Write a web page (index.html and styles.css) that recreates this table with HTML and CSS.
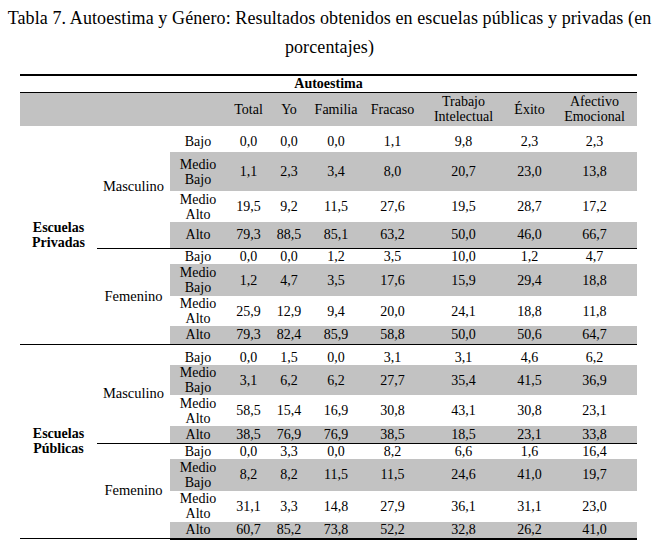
FILE: index.html
```html
<!DOCTYPE html>
<html lang="es">
<head>
<meta charset="utf-8">
<link rel="stylesheet" href="styles.css">
</head>
<body>
<div class="title">
  <div class="tline">Tabla 7. Autoestima y Género: Resultados obtenidos en escuelas públicas y privadas (en</div>
  <div class="tline">porcentajes)</div>
</div>
<table class="tbl">
  <colgroup>
    <col class="c77"><col class="c73"><col class="c56"><col class="c45"><col class="c36"><col class="c58"><col class="c55"><col class="c87"><col class="c45"><col class="c85">
  </colgroup>
  <tr class="h17 top"><th colspan="10" class="bold">Autoestima</th></tr>
  <tr class="h34 grey head">
    <td></td><td></td><td></td><td>Total</td><td>Yo</td><td>Familia</td><td>Fracaso</td><td>Trabajo<br>Intelectual</td><td>Éxito</td><td>Afectivo<br>Emocional</td>
  </tr>

  <tr class="h26 low"><td rowspan="8" class="bold">Escuelas<br>Privadas</td><td rowspan="4" class="sex">Masculino</td><td>Bajo</td><td>0,0</td><td>0,0</td><td>0,0</td><td>1,1</td><td>9,8</td><td>2,3</td><td>2,3</td></tr>
  <tr class="h39 g"><td>Medio<br>Bajo</td><td>1,1</td><td>2,3</td><td>3,4</td><td>8,0</td><td>20,7</td><td>23,0</td><td>13,8</td></tr>
  <tr class="h31"><td>Medio<br>Alto</td><td>19,5</td><td>9,2</td><td>11,5</td><td>27,6</td><td>19,5</td><td>28,7</td><td>17,2</td></tr>
  <tr class="h26 g sub"><td>Alto</td><td>79,3</td><td>88,5</td><td>85,1</td><td>63,2</td><td>50,0</td><td>46,0</td><td>66,7</td></tr>

  <tr class="h16"><td rowspan="4" class="sex">Femenino</td><td>Bajo</td><td>0,0</td><td>0,0</td><td>1,2</td><td>3,5</td><td>10,0</td><td>1,2</td><td>4,7</td></tr>
  <tr class="h32 g"><td>Medio<br>Bajo</td><td>1,2</td><td>4,7</td><td>3,5</td><td>17,6</td><td>15,9</td><td>29,4</td><td>18,8</td></tr>
  <tr class="h26"><td>Medio<br>Alto</td><td>25,9</td><td>12,9</td><td>9,4</td><td>20,0</td><td>24,1</td><td>18,8</td><td>11,8</td></tr>
  <tr class="h18 g sec"><td>Alto</td><td>79,3</td><td>82,4</td><td>85,9</td><td>58,8</td><td>50,0</td><td>50,6</td><td>64,7</td></tr>

  <tr class="h21 low"><td rowspan="8" class="bold">Escuelas<br>Públicas</td><td rowspan="4" class="sex">Masculino</td><td>Bajo</td><td>0,0</td><td>1,5</td><td>0,0</td><td>3,1</td><td>3,1</td><td>4,6</td><td>6,2</td></tr>
  <tr class="h30 g"><td>Medio<br>Bajo</td><td>3,1</td><td>6,2</td><td>6,2</td><td>27,7</td><td>35,4</td><td>41,5</td><td>36,9</td></tr>
  <tr class="h31"><td>Medio<br>Alto</td><td>58,5</td><td>15,4</td><td>16,9</td><td>30,8</td><td>43,1</td><td>30,8</td><td>23,1</td></tr>
  <tr class="h17 g sub"><td>Alto</td><td>38,5</td><td>76,9</td><td>76,9</td><td>38,5</td><td>18,5</td><td>23,1</td><td>33,8</td></tr>

  <tr class="h15"><td rowspan="4" class="sex">Femenino</td><td>Bajo</td><td>0,0</td><td>3,3</td><td>0,0</td><td>8,2</td><td>6,6</td><td>1,6</td><td>16,4</td></tr>
  <tr class="h32 g"><td>Medio<br>Bajo</td><td>8,2</td><td>8,2</td><td>11,5</td><td>11,5</td><td>24,6</td><td>41,0</td><td>19,7</td></tr>
  <tr class="h31"><td>Medio<br>Alto</td><td>31,1</td><td>3,3</td><td>14,8</td><td>27,9</td><td>36,1</td><td>31,1</td><td>23,0</td></tr>
  <tr class="h17 g sec"><td>Alto</td><td>60,7</td><td>85,2</td><td>73,8</td><td>52,2</td><td>32,8</td><td>26,2</td><td>41,0</td></tr>
</table>
</body>
</html>
```

FILE: styles.css
```css
html, body {
  margin: 0;
  padding: 0;
  background: #ffffff;
}
body {
  font-family: "Liberation Serif", "Times New Roman", serif;
  color: #000000;
  width: 659px;
}
.title {
  padding-top: 4px;
  text-align: center;
  font-size: 18px;
  line-height: 29px;
}
.tline {
  white-space: nowrap;
  letter-spacing: 0.1px;
}
.tbl {
  margin: 12px 0 0 20px;
  width: 617px;
  border-collapse: collapse;
  table-layout: fixed;
  font-size: 14px;
  line-height: 15px;
}
.c77 { width: 77px; }
.c73 { width: 73px; }
.c56 { width: 56px; }
.c45 { width: 45px; }
.c36 { width: 36px; }
.c58 { width: 58px; }
.c55 { width: 55px; }
.c87 { width: 87px; }
.c85 { width: 85px; }
.tbl th, .tbl td {
  padding: 0;
  text-align: center;
  vertical-align: middle;
  font-weight: normal;
}
.tbl .bold { font-weight: bold; }
.tbl .sex { font-size: 14.5px; }
.low td { padding-top: 5px; }
.low td[rowspan] { padding-top: 0; }
.top th { border-top: 2px solid #000; border-bottom: 1px solid #000; }
.h15 { height: 15px; }
.h16 { height: 16px; }
.h17 { height: 17px; }
.h18 { height: 18px; }
.h21 { height: 21px; }
.h26 { height: 26px; }
.h30 { height: 30px; }
.h31 { height: 31px; }
.h32 { height: 32px; }
.h34 { height: 34px; }
.h39 { height: 39px; }
.grey td { background: #c2c2c2; }
.g td { background: #c2c2c2; }
.g td[rowspan] { background: transparent; }
.sub td { border-bottom: 1px solid #000; }
.sec td { border-bottom: 1px solid #000; }
.tbl tr:last-child td { border-bottom: 2px solid #000; }
td.sex { border-bottom: 1px solid #000; }
td.bold { border-bottom: 1px solid #000; }
```
